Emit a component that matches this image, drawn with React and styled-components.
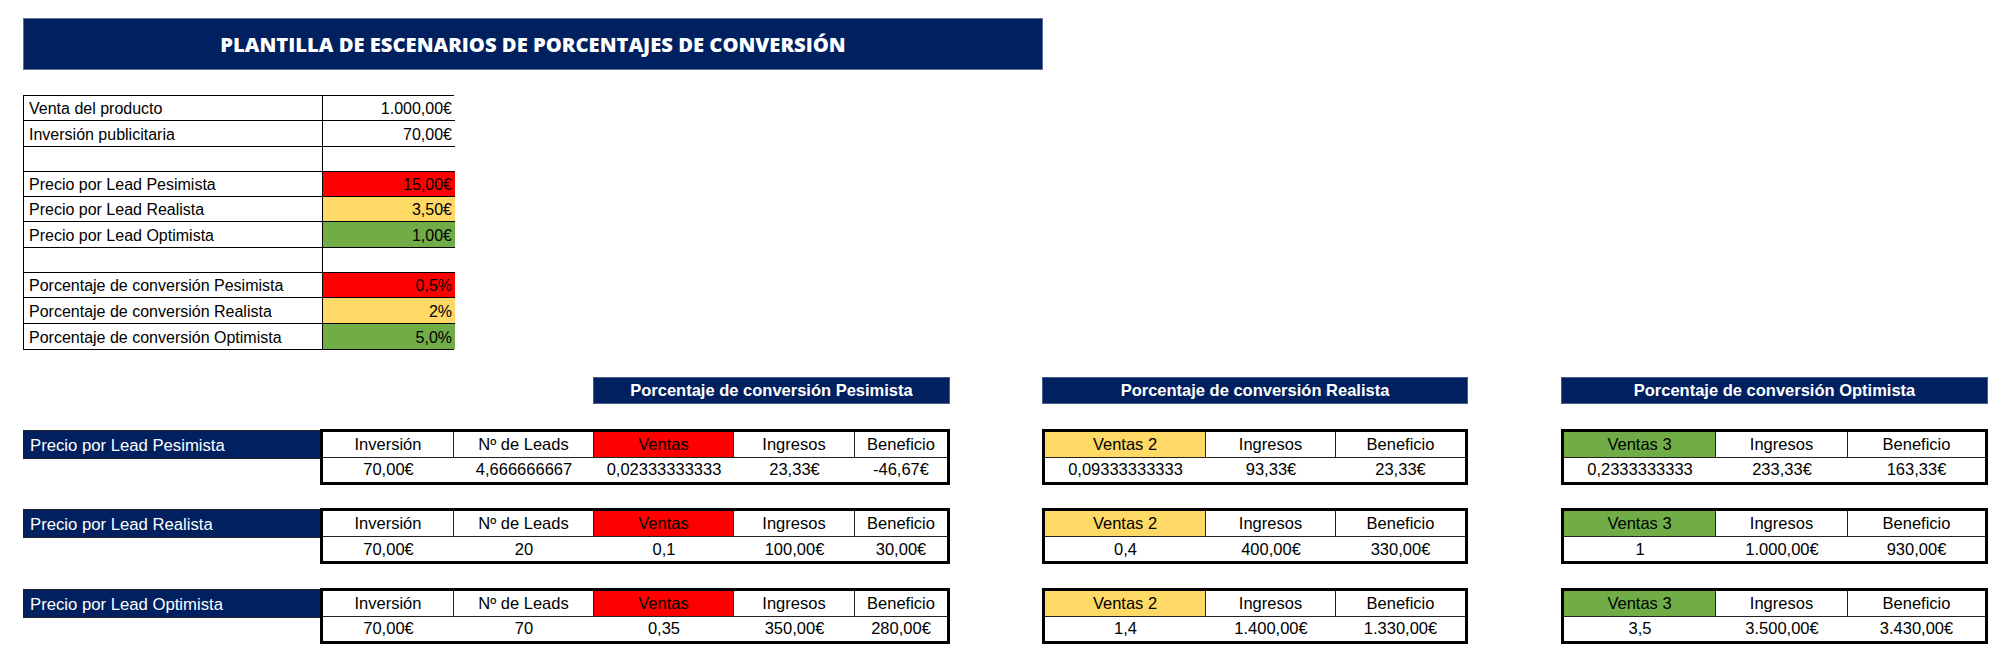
import React from 'react';
import styled, { createGlobalStyle } from 'styled-components';

const NAVY = '#002060';
const RED = '#ff0000';
const YELLOW = '#ffd966';
const GREEN = '#70ad47';

const GlobalStyle = createGlobalStyle`
  html, body {
    margin: 0;
    padding: 0;
    background: #ffffff;
  }
  body {
    font-family: "Liberation Sans", Arial, sans-serif;
    color: #000;
  }
`;

const Page = styled.div`
  width: 2000px;
  height: 665px;
  padding: 18px 0 0 23px;
  box-sizing: border-box;
  overflow: hidden;
`;

const TitleBar = styled.div`
  width: 1020px;
  height: 52px;
  box-sizing: border-box;
  background: ${NAVY};
  border: 1px solid #5d6f94;
  display: flex;
  align-items: center;
  justify-content: center;
  color: #fff;
  font-family: "Open Sans", sans-serif;
  font-weight: 800;
  font-size: 20.2px;
`;

const InputTable = styled.div`
  margin-top: 25px;
  display: grid;
  grid-template-columns: 299px 132px;
  grid-auto-rows: 25.3px;
  width: 431px;
  border: 1px solid #000;
  border-right-width: 1.5px;
  box-sizing: border-box;
  font-size: 16px;
`;

const InputLabel = styled.div`
  border-right: 1px solid #000;
  border-bottom: ${p => (p.$last ? 'none' : '1px solid #000')};
  display: flex;
  align-items: flex-end;
  padding: 0 0 2px 5px;
  white-space: nowrap;
`;

const InputValue = styled.div`
  border-bottom: ${p => (p.$last ? 'none' : '1px solid #000')};
  background: ${p => p.$bg || '#fff'};
  display: flex;
  align-items: flex-end;
  justify-content: flex-end;
  padding: 0 3px 2px 0;
  white-space: nowrap;
`;

const Scenarios = styled.div`
  margin-top: 27px;
  display: flex;
  flex-direction: column;
`;

const HeaderRow = styled.div`
  display: flex;
  height: 27px;
  margin-bottom: 25px;
`;

const SectionHeader = styled.div`
  width: ${p => p.$w}px;
  margin-left: ${p => p.$offset}px;
  box-sizing: border-box;
  background: ${NAVY};
  border: 1px solid #4a5d85;
  color: #fff;
  font-weight: 700;
  font-size: 16.5px;
  display: flex;
  align-items: center;
  justify-content: center;
  white-space: nowrap;
`;

const Groups = styled.div`
  display: flex;
  flex-direction: column;
  gap: 23.5px;
`;

const GroupRow = styled.div`
  display: flex;
  align-items: flex-start;
`;

const LeadLabel = styled.div`
  width: 297px;
  height: 29px;
  margin-top: 1px;
  box-sizing: border-box;
  background: ${NAVY};
  border: 1px solid #222;
  border-right: none;
  color: #fff;
  font-size: 16.7px;
  display: flex;
  align-items: flex-end;
  padding: 0 0 2px 6px;
  white-space: nowrap;
`;

const CalcTable = styled.div`
  margin-left: ${p => p.$offset || 0}px;
  display: grid;
  grid-template-columns: ${p => p.$cols.map(c => `${c}px`).join(' ')};
  grid-template-rows: 26px 24px;
  border: 3px solid #000;
  font-size: 16.5px;
`;

const HeadCell = styled.div`
  background: ${p => p.$bg || '#fff'};
  border-right: ${p => (p.$last ? 'none' : '1px solid #222')};
  border-bottom: 1px solid #222;
  display: flex;
  align-items: center;
  justify-content: center;
  white-space: nowrap;
`;

const DataCell = styled.div`
  display: flex;
  align-items: center;
  justify-content: center;
  white-space: nowrap;
`;

const inputs = [
  ['Venta del producto', '1.000,00€'],
  ['Inversión publicitaria', '70,00€'],
  ['', ''],
  ['Precio por Lead Pesimista', '15,00€', RED],
  ['Precio por Lead Realista', '3,50€', YELLOW],
  ['Precio por Lead Optimista', '1,00€', GREEN],
  ['', ''],
  ['Porcentaje de conversión Pesimista', '0,5%', RED],
  ['Porcentaje de conversión Realista', '2%', YELLOW],
  ['Porcentaje de conversión Optimista', '5,0%', GREEN]
];

const COLS1 = [131, 140, 140, 121, 92];
const COLS2 = [161, 130, 129];
const COLS3 = [152, 132, 137];

const groups = [
  {
    label: 'Precio por Lead Pesimista',
    t1: ['70,00€', '4,666666667', '0,02333333333', '23,33€', '-46,67€'],
    t2: ['0,09333333333', '93,33€', '23,33€'],
    t3: ['0,2333333333', '233,33€', '163,33€']
  },
  {
    label: 'Precio por Lead Realista',
    t1: ['70,00€', '20', '0,1', '100,00€', '30,00€'],
    t2: ['0,4', '400,00€', '330,00€'],
    t3: ['1', '1.000,00€', '930,00€']
  },
  {
    label: 'Precio por Lead Optimista',
    t1: ['70,00€', '70', '0,35', '350,00€', '280,00€'],
    t2: ['1,4', '1.400,00€', '1.330,00€'],
    t3: ['3,5', '3.500,00€', '3.430,00€']
  }
];

function Calc({ cols, heads, colors, values, offset }) {
  return (
    <CalcTable $cols={cols} $offset={offset}>
      {heads.map((h, i) => (
        <HeadCell key={h} $bg={colors[i]} $last={i === heads.length - 1}>
          {h}
        </HeadCell>
      ))}
      {values.map((v, i) => (
        <DataCell key={i}>{v}</DataCell>
      ))}
    </CalcTable>
  );
}

export default function App() {
  return (
    <Page>
      <GlobalStyle />
      <TitleBar>PLANTILLA DE ESCENARIOS DE PORCENTAJES DE CONVERSIÓN</TitleBar>

      <InputTable>
        {inputs.map(([label, value, bg], i) => (
          <React.Fragment key={i}>
            <InputLabel $last={i === inputs.length - 1}>{label}</InputLabel>
            <InputValue $bg={bg} $last={i === inputs.length - 1}>
              {value}
            </InputValue>
          </React.Fragment>
        ))}
      </InputTable>

      <Scenarios>
        <HeaderRow>
          <SectionHeader $w={357} $offset={570}>
            Porcentaje de conversión Pesimista
          </SectionHeader>
          <SectionHeader $w={426} $offset={92}>
            Porcentaje de conversión Realista
          </SectionHeader>
          <SectionHeader $w={427} $offset={93}>
            Porcentaje de conversión Optimista
          </SectionHeader>
        </HeaderRow>

        <Groups>
          {groups.map(g => (
            <GroupRow key={g.label}>
              <LeadLabel>{g.label}</LeadLabel>
              <Calc
                cols={COLS1}
                heads={['Inversión', 'Nº de Leads', 'Ventas', 'Ingresos', 'Beneficio']}
                colors={[null, null, RED, null, null]}
                values={g.t1}
              />
              <Calc
                offset={92}
                cols={COLS2}
                heads={['Ventas 2', 'Ingresos', 'Beneficio']}
                colors={[YELLOW, null, null]}
                values={g.t2}
              />
              <Calc
                offset={93}
                cols={COLS3}
                heads={['Ventas 3', 'Ingresos', 'Beneficio']}
                colors={[GREEN, null, null]}
                values={g.t3}
              />
            </GroupRow>
          ))}
        </Groups>
      </Scenarios>
    </Page>
  );
}
